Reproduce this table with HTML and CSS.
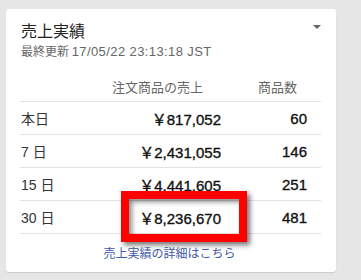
FILE: index.html
```html
<!DOCTYPE html>
<html lang="ja">
<head>
<meta charset="utf-8">
<link rel="stylesheet" href="styles.css">
</head>
<body>
<div class="card">
  <div class="head">
    <div class="titles">
      <div class="title">売上実績</div>
      <div class="sub">最終更新 <span class="ts">17/05/22 23:13:18 JST</span></div>
    </div>
    <div class="caret"></div>
  </div>
  <div class="table">
    <div class="row hdr">
      <div class="c1"></div>
      <div class="c2">注文商品の売上</div>
      <div class="c3">商品数</div>
    </div>
    <div class="row">
      <div class="c1">本日</div>
      <div class="c2 num">￥817,052</div>
      <div class="c3 num">60</div>
    </div>
    <div class="row">
      <div class="c1">7 日</div>
      <div class="c2 num">￥2,431,055</div>
      <div class="c3 num">146</div>
    </div>
    <div class="row">
      <div class="c1">15 日</div>
      <div class="c2 num">￥4,441,605</div>
      <div class="c3 num">251</div>
    </div>
    <div class="row last">
      <div class="c1">30 日</div>
      <div class="c2 num">￥8,236,670</div>
      <div class="c3 num">481</div>
    </div>
  </div>
  <div class="more"><a href="#">売上実績の詳細はこちら</a></div>
  <div class="highlight"></div>
</div>
</body>
</html>
```
FILE: styles.css
```css
html, body {
  margin: 0;
  padding: 0;
}
body {
  background: #e6e6e6;
  font-family: "Liberation Sans", "Noto Sans CJK JP", sans-serif;
  width: 361px;
  height: 280px;
  overflow: hidden;
}
.card {
  position: relative;
  box-sizing: border-box;
  margin: 9px 0 0 6px;
  width: 330px;
  height: 263px;
  background: #fff;
  border-radius: 3px;
  box-shadow: 0 1px 1px rgba(0,0,0,0.12);
  padding: 9.5px 15px 0 14px;
}
.head {
  display: flex;
  justify-content: space-between;
  align-items: flex-start;
  padding-left: 1px;
}
.title {
  font-family: "Noto Sans CJK JP", sans-serif;
  font-size: 16px;
  line-height: 23px;
  color: #222;
}
.sub {
  font-family: "Noto Sans CJK JP", sans-serif;
  font-size: 12px;
  line-height: 17px;
  color: #666;
  white-space: nowrap;
}
.ts {
  font-family: "Liberation Sans", sans-serif;
  font-size: 13px;
  line-height: 15px;
  letter-spacing: 0.4px;
}
.caret {
  margin: 6.5px 0 0 0;
  width: 0;
  height: 0;
  border-left: 4px solid transparent;
  border-right: 4px solid transparent;
  border-top: 4px solid #666;
}
.table {
  margin-top: 12.5px;
}
.row {
  display: flex;
  align-items: center;
  height: 32px;
  border-top: 1px solid #e2e2e2;
}
.row.last {
  border-bottom: 1px solid #e2e2e2;
}
.row.hdr {
  border-top: none;
  height: 30px;
  font-family: "Noto Sans CJK JP", sans-serif;
  font-size: 13px;
  color: #666;
}
.c1 {
  width: 60px;
  padding-left: 1px;
  font-family: "Liberation Sans", "Noto Sans CJK JP", sans-serif;
  font-size: 14px;
  color: #333;
}
.c2 {
  width: 140px;
  text-align: right;
}
.c3 {
  width: 86px;
  text-align: right;
}
.hdr .c2 { padding-right: 18px; width: 122px; }
.hdr .c3 { padding-right: 10px; width: 76px; }
.num {
  font-family: "Liberation Sans", "Noto Sans CJK JP", sans-serif;
  font-size: 15px;
  color: #111;
  -webkit-text-stroke: 0.35px #111;
}
.more {
  margin-top: 11px;
  text-align: center;
  font-family: "Noto Sans CJK JP", sans-serif;
  font-size: 12px;
  line-height: 16px;
  padding-right: 2px;
}
.more a {
  color: #3f5aa8;
  text-decoration: none;
}
.highlight {
  position: absolute;
  left: 115px;
  top: 182px;
  width: 126px;
  height: 51px;
  box-sizing: border-box;
  border: 8px solid #f00;
  box-shadow: 3px 3px 5px rgba(0,0,0,0.55), inset 3px 3px 5px rgba(0,0,0,0.45);
}
```
